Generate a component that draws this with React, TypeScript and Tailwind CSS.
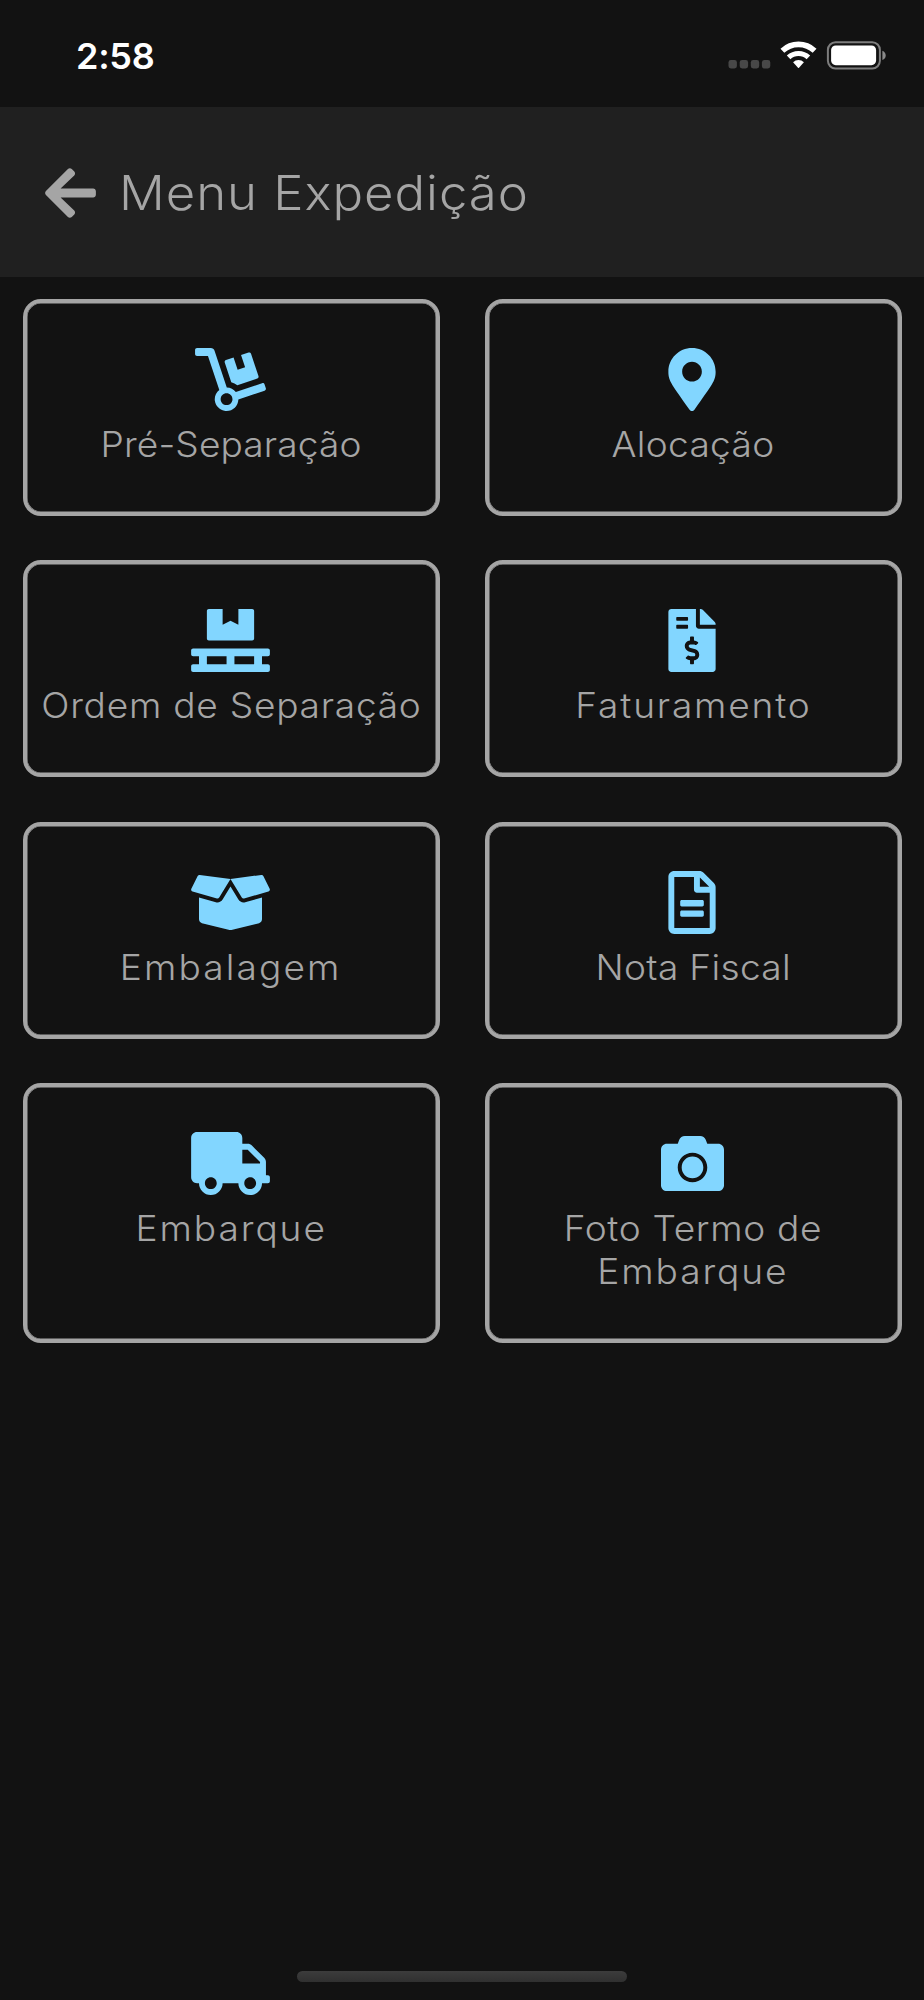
import React from 'react';
import {
    FaArrowLeft,
    FaBoxOpen,
    FaCamera,
    FaDolly,
    FaFileInvoiceDollar,
    FaMapMarkerAlt,
    FaPallet,
    FaRegFileAlt,
    FaTruck,
} from 'react-icons/fa';
import type { IconType } from 'react-icons';

interface Line {
    text: string
    tracking: string
}

interface MenuItem {
    lines: Line[]
    icon: IconType
    iconWidth: string
}

const items: MenuItem[] = [
    { lines: [{ text: 'Pré-Separação', tracking: 'tracking-[0.1px]' }], icon: FaDolly, iconWidth: 'w-[71px]' },
    { lines: [{ text: 'Alocação', tracking: 'tracking-[0.3px]' }], icon: FaMapMarkerAlt, iconWidth: 'w-[48px]' },
    { lines: [{ text: 'Ordem de Separação', tracking: 'tracking-[0.7px]' }], icon: FaPallet, iconWidth: 'w-[79px]' },
    { lines: [{ text: 'Faturamento', tracking: 'tracking-[1.7px]' }], icon: FaFileInvoiceDollar, iconWidth: 'w-[48px]' },
    { lines: [{ text: 'Embalagem', tracking: 'tracking-[2px]' }], icon: FaBoxOpen, iconWidth: 'w-[79px]' },
    { lines: [{ text: 'Nota Fiscal', tracking: 'tracking-[0.3px]' }], icon: FaRegFileAlt, iconWidth: 'w-[48px]' },
    { lines: [{ text: 'Embarque', tracking: 'tracking-[1.8px]' }], icon: FaTruck, iconWidth: 'w-[79px]' },
    {
        lines: [
            { text: 'Foto Termo de', tracking: 'tracking-[0.6px]' },
            { text: 'Embarque', tracking: 'tracking-[1.8px]' },
        ],
        icon: FaCamera,
        iconWidth: 'w-[63px]',
    },
];

const StatusIcons = () => (
    <svg width="160" height="30" viewBox="0 0 160 30" fill="none">
        {/* no cellular signal */}
        <g fill="#484848">
            <rect x="1.5" y="20.1" width="8.4" height="8.4" rx="2.4" />
            <rect x="12.7" y="20.1" width="8.4" height="8.4" rx="2.4" />
            <rect x="23.8" y="20.1" width="8.4" height="8.4" rx="2.4" />
            <rect x="34.9" y="20.1" width="8.4" height="8.4" rx="2.4" />
        </g>
        {/* wifi */}
        <path d="M55.4 10.7A23.6 23.6 0 0 1 87.6 10.7" stroke="#fff" strokeWidth="5.6" />
        <path d="M61.6 17.4A14.5 14.5 0 0 1 81.4 17.4" stroke="#fff" strokeWidth="5.2" />
        <path d="M66.1 22.2A7.9 7.9 0 0 1 76.9 22.2L72 27.8q-.5.5-1 0z" fill="#fff" />
        {/* battery */}
        <rect x="100.9" y="2.2" width="52" height="26.2" rx="7.6" stroke="#7d7d7d" strokeWidth="2" />
        <rect x="104.1" y="5.4" width="45" height="19.8" rx="4.6" fill="#fff" />
        <path d="M155.4 10.8c2.2.9 3.3 2.6 3.3 4.6s-1.1 3.7-3.3 4.6z" fill="#8a8a8a" />
    </svg>
);

const StatusBar = () => (
    <div className="flex h-[107px] justify-between pl-[76px] pr-[37px]">
        <span className="mt-[34px] text-[36px] leading-[44px] font-semibold tracking-[-0.3px] text-white">2:58</span>
        <div className="mt-10">
            <StatusIcons />
        </div>
    </div>
);

const Header = () => (
    <header className="flex h-[170px] items-center bg-[#202020] pt-0.5 pl-[45px] text-[#a5a5a5]">
        <button>
            <FaArrowLeft className="h-[58px] w-[51px]" />
        </button>
        <h1 className="ml-[23px] origin-left scale-x-[1.06] text-[48px] leading-[60px] font-light tracking-[0.9px]">
            Menu Expedição
        </h1>
    </header>
);

const MenuCard = ({ lines, icon: Icon, iconWidth }: MenuItem) => (
    <button className="flex min-h-[217px] flex-col items-center rounded-[18px] border-4 border-[#a5a5a5] px-3 pt-[45px] pb-[45px] text-[#a5a5a5] shadow-[inset_0_0_0_0.5px_#a5a5a5]">
        <Icon className={`mr-[2px] h-[63px] text-[#82d6ff] ${iconWidth}`} />
        <span className="mt-3 flex scale-x-[1.06] flex-col items-center text-[35px] leading-[43.6px] font-light whitespace-nowrap">
            {lines.map((line) => (
                <span key={line.text} className={line.tracking}>{line.text}</span>
            ))}
        </span>
    </button>
);

const App = () => {
    return (
        <div className="flex h-[2000px] w-[924px] flex-col bg-[#121212] font-['Inter',sans-serif]">
            <StatusBar />
            <Header />
            <main className="grid grid-cols-2 gap-x-[45px] gap-y-[44.2px] px-[22.5px] pt-[22.2px]">
                {items.map((item) => (
                    <MenuCard key={item.lines[0].text} {...item} />
                ))}
            </main>
            <div className="mt-auto mb-[18px] ml-[297px] h-[11px] w-[330px] rounded-full bg-linear-to-b from-[#3c3c3c] to-[#303030]" />
        </div>
    );
};

export default App;
